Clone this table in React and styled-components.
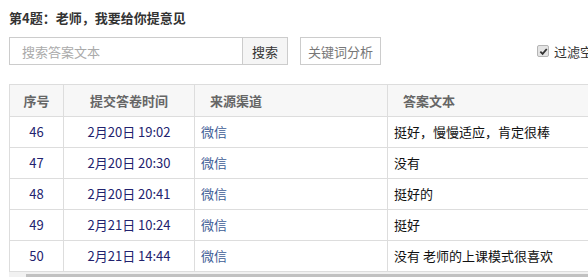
import React from "react";
import styled, { createGlobalStyle } from "styled-components";

const Global = createGlobalStyle`
  html, body { margin: 0; padding: 0; background: #fff; overflow: hidden; }
  body { font-family: "Noto Sans CJK SC", "Liberation Sans", Arial, sans-serif; font-size: 13px; color: #333; }
  * { box-sizing: border-box; }
`;

const Page = styled.div`
  padding: 8px 0 0 9px;
  width: 760px;
`;

const Title = styled.h3`
  margin: 0;
  font-size: 13px;
  line-height: 20px;
  font-weight: bold;
  color: #333;
`;

const Toolbar = styled.div`
  display: flex;
  align-items: center;
  margin-top: 9px;
  height: 28px;
`;

const SearchGroup = styled.div`
  display: flex;
  height: 28px;
`;

const SearchInput = styled.input`
  width: 233px;
  height: 28px;
  border: 1px solid #ccc;
  border-right: none;
  padding: 0 12px;
  font-family: inherit;
  font-size: 13px;
  color: #333;
  outline: none;
  &::placeholder { color: #aaa; }
`;

const Button = styled.button`
  height: 28px;
  padding: 0 ${(p) => p.$pad || 7}px;
  border: 1px solid #ccc;
  background: ${(p) => (p.$grey ? "#f5f5f5" : "#fff")};
  color: ${(p) => (p.$muted ? "#777" : "#333")};
  font-family: inherit;
  font-size: 13px;
  margin-left: ${(p) => p.$ml || 0}px;
  cursor: pointer;
  white-space: nowrap;
`;

const FilterLabel = styled.label`
  display: flex;
  align-items: center;
  margin-left: 156px;
  gap: 5px;
  color: #333;
  white-space: nowrap;
  font-size: 13px;
`;

const CheckBox = styled.span`
  width: 12px;
  height: 12px;
  border: 1px solid #b5b5b5;
  border-radius: 2px;
  background: #e4e4e4;
  display: flex;
  align-items: center;
  justify-content: center;
`;

const TableWrap = styled.div`
  margin-top: 19px;
  width: 740px;
  overflow: hidden;
`;

const Table = styled.table`
  border-collapse: separate;
  border-spacing: 0;
  width: 800px;
  table-layout: fixed;
  border-top: 1px solid #ddd;
  border-left: 1px solid #ddd;
`;

const Th = styled.th`
  background: #f7f7f7;
  color: #666;
  font-weight: bold;
  font-size: 13px;
  line-height: 31px;
  padding: 0 0 0 ${(p) => (p.$left ? 15 : 0)}px;
  text-align: ${(p) => (p.$left ? "left" : "center")};
  border-right: 1px solid #ddd;
  border-bottom: 1px solid #ddd;
  white-space: nowrap;
`;

const Td = styled.td`
  font-size: 13px;
  line-height: 30px;
  padding: 0 0 0 ${(p) => (p.$left ? 6 : 0)}px;
  text-align: ${(p) => (p.$left ? "left" : "center")};
  color: ${(p) => p.$color || "#222"};
  border-right: 1px solid #ddd;
  border-bottom: 1px solid #ddd;
  white-space: nowrap;
  overflow: hidden;
`;

const ScrollTrack = styled.div`
  height: 17px;
  background: #f1f1f1;
  padding: 2px 0 2px 17px;
  display: flex;
`;

const ScrollThumb = styled.div`
  flex: 1;
  background: #c1c1c1;
`;

const rows = [
  ["46", "2月20日 19:02", "微信", "挺好，慢慢适应，肯定很棒"],
  ["47", "2月20日 20:30", "微信", "没有"],
  ["48", "2月20日 20:41", "微信", "挺好的"],
  ["49", "2月21日 10:24", "微信", "挺好"],
  ["50", "2月21日 14:44", "微信", "没有 老师的上课模式很喜欢"],
];

export default function App() {
  return (
    <>
      <Global />
      <Page>
        <Title>第4题：老师，我要给你提意见</Title>
        <Toolbar>
          <SearchGroup>
            <SearchInput placeholder="搜索答案文本" />
            <Button $grey $pad={9}>搜索</Button>
          </SearchGroup>
          <Button $muted $ml={12} $pad={7}>关键词分析</Button>
          <FilterLabel>
            <CheckBox>
              <svg width="9" height="9" viewBox="0 0 10 10">
                <path d="M1.5 5.2 L4 7.6 L8.6 2.2" fill="none" stroke="#333" strokeWidth="2" />
              </svg>
            </CheckBox>
            过滤空白答案
          </FilterLabel>
        </Toolbar>
        <TableWrap>
          <Table>
            <colgroup>
              <col style={{ width: 54 }} />
              <col style={{ width: 131 }} />
              <col style={{ width: 193 }} />
              <col />
            </colgroup>
            <thead>
              <tr>
                <Th>序号</Th>
                <Th>提交答卷时间</Th>
                <Th $left>来源渠道</Th>
                <Th $left>答案文本</Th>
              </tr>
            </thead>
            <tbody>
              {rows.map((r) => (
                <tr key={r[0]}>
                  <Td $color="#22226e">{r[0]}</Td>
                  <Td $color="#22226e">{r[1]}</Td>
                  <Td $left $color="#3d5c96">{r[2]}</Td>
                  <Td $left $color="#111">{r[3]}</Td>
                </tr>
              ))}
            </tbody>
          </Table>
          <ScrollTrack>
            <ScrollThumb />
          </ScrollTrack>
        </TableWrap>
      </Page>
    </>
  );
}
